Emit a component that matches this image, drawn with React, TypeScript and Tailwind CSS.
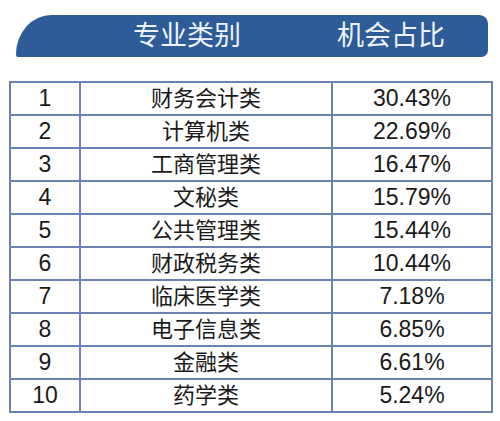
const rows = [
  ['1', '财务会计类', '30.43%'],
  ['2', '计算机类', '22.69%'],
  ['3', '工商管理类', '16.47%'],
  ['4', '文秘类', '15.79%'],
  ['5', '公共管理类', '15.44%'],
  ['6', '财政税务类', '10.44%'],
  ['7', '临床医学类', '7.18%'],
  ['8', '电子信息类', '6.85%'],
  ['9', '金融类', '6.61%'],
  ['10', '药学类', '5.24%'],
];

export default function App() {
  return (
    <div
      className="w-[500px] h-[421px] bg-white overflow-hidden"
      style={{ fontFamily: '"Liberation Sans", "Noto Sans CJK SC", sans-serif' }}
    >
      {/* 表头横幅 */}
      <div className="ml-[16px] mt-[15px] w-[472px] h-[42px] bg-[#2d5c98] rounded-tl-[37px_41px] rounded-bl-[3px] rounded-tr-[9px] rounded-br-[7px] flex items-center pl-[117px] text-[#eef3fb] text-[27px] leading-none">
        <span className="w-[110px]">专业类别</span>
        <span className="ml-[94px]">机会占比</span>
      </div>

      {/* 数据表 */}
      <table className="ml-[9px] mt-[24px] w-[484px] border-collapse text-[#1a1a1a]">
        <tbody>
          {rows.map(([n, name, pct]) => (
            <tr key={n} className="h-[33px]">
              <td className="w-[70px] border-2 border-[#6a82b0] text-center text-[23px] leading-none">
                {n}
              </td>
              <td className="w-[252px] border-2 border-[#6a82b0] text-center text-[22px] leading-none">
                {name}
              </td>
              <td className="border-2 border-[#6a82b0] text-center text-[23px] leading-none">
                {pct}
              </td>
            </tr>
          ))}
        </tbody>
      </table>
    </div>
  );
}
